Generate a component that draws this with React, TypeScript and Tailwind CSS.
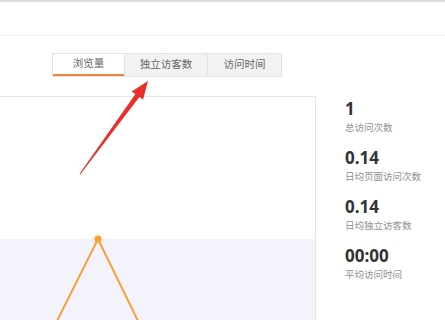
import React from "react";

const stats = [
  { v: "1", l: "总访问次数" },
  { v: "0.14", l: "日均页面访问次数" },
  { v: "0.14", l: "日均独立访客数" },
  { v: "00:00", l: "平均访问时间" },
];

export default function App() {
  return (
    <div
      className="relative w-[445px] h-[320px] overflow-hidden bg-white"
      style={{ fontFamily: '"Noto Sans", "Noto Sans CJK SC", sans-serif' }}
    >
      <div className="h-[36px] border-t-2 border-b border-t-[#dcdcdc] border-b-[#efefef]" />
      <div className="pt-[17px] pl-[52px] flex">
        <div className="flex h-[24px] border border-[#e3e3e3] text-[10.5px] text-[#666]">
          <div className="w-[71px] flex items-center justify-center bg-white border-b-2 border-b-[#f0843c]">
            浏览量
          </div>
          <div className="w-[83px] flex items-center justify-center bg-[#f2f2f2] border-l border-[#e3e3e3]">
            独立访客数
          </div>
          <div className="w-[74px] flex items-center justify-center bg-[#f2f2f2] border-l border-[#e3e3e3]">
            访问时间
          </div>
        </div>
      </div>
      <div className="mt-[19px] flex">
        <div className="relative ml-[-1px] w-[317px] h-[260px] border border-[#e6e6e6] flex flex-col">
          <div className="h-[142px] bg-white" />
          <div className="flex-1 bg-[#f3f3fc]" />
          <svg className="absolute left-0 top-0" width="317" height="260" viewBox="0 0 317 260">
            <circle cx="98" cy="142" r="7" fill="#f7a136" opacity="0.07" />
            <polyline
              points="55,228 98,142 140,228"
              fill="none"
              stroke="#f7a136"
              strokeWidth="2"
            />
            <circle cx="98" cy="142" r="3.5" fill="#f7a136" />
          </svg>
        </div>
        <div className="ml-[29px] pt-[3px] flex flex-col">
          {stats.map((s, i) => (
            <div key={i} className="mb-[13px]">
              <div
                className="text-[17px] leading-[20px] font-bold text-[#333]"
                style={{ fontFamily: '"Open Sans", "Noto Sans", sans-serif' }}
              >
                {s.v}
              </div>
              <div className="mt-[2px] text-[9.5px] leading-[14px] text-[#909090]">{s.l}</div>
            </div>
          ))}
        </div>
      </div>
      <svg className="absolute left-0 top-0 pointer-events-none" width="445" height="320" viewBox="0 0 445 320">
        <polygon
          points="148,81 143.1,99.6 139.4,97 80.4,174.3 79.6,173.7 135.4,94 131.7,91.4"
          fill="#ea2e2a"
        />
      </svg>
    </div>
  );
}
